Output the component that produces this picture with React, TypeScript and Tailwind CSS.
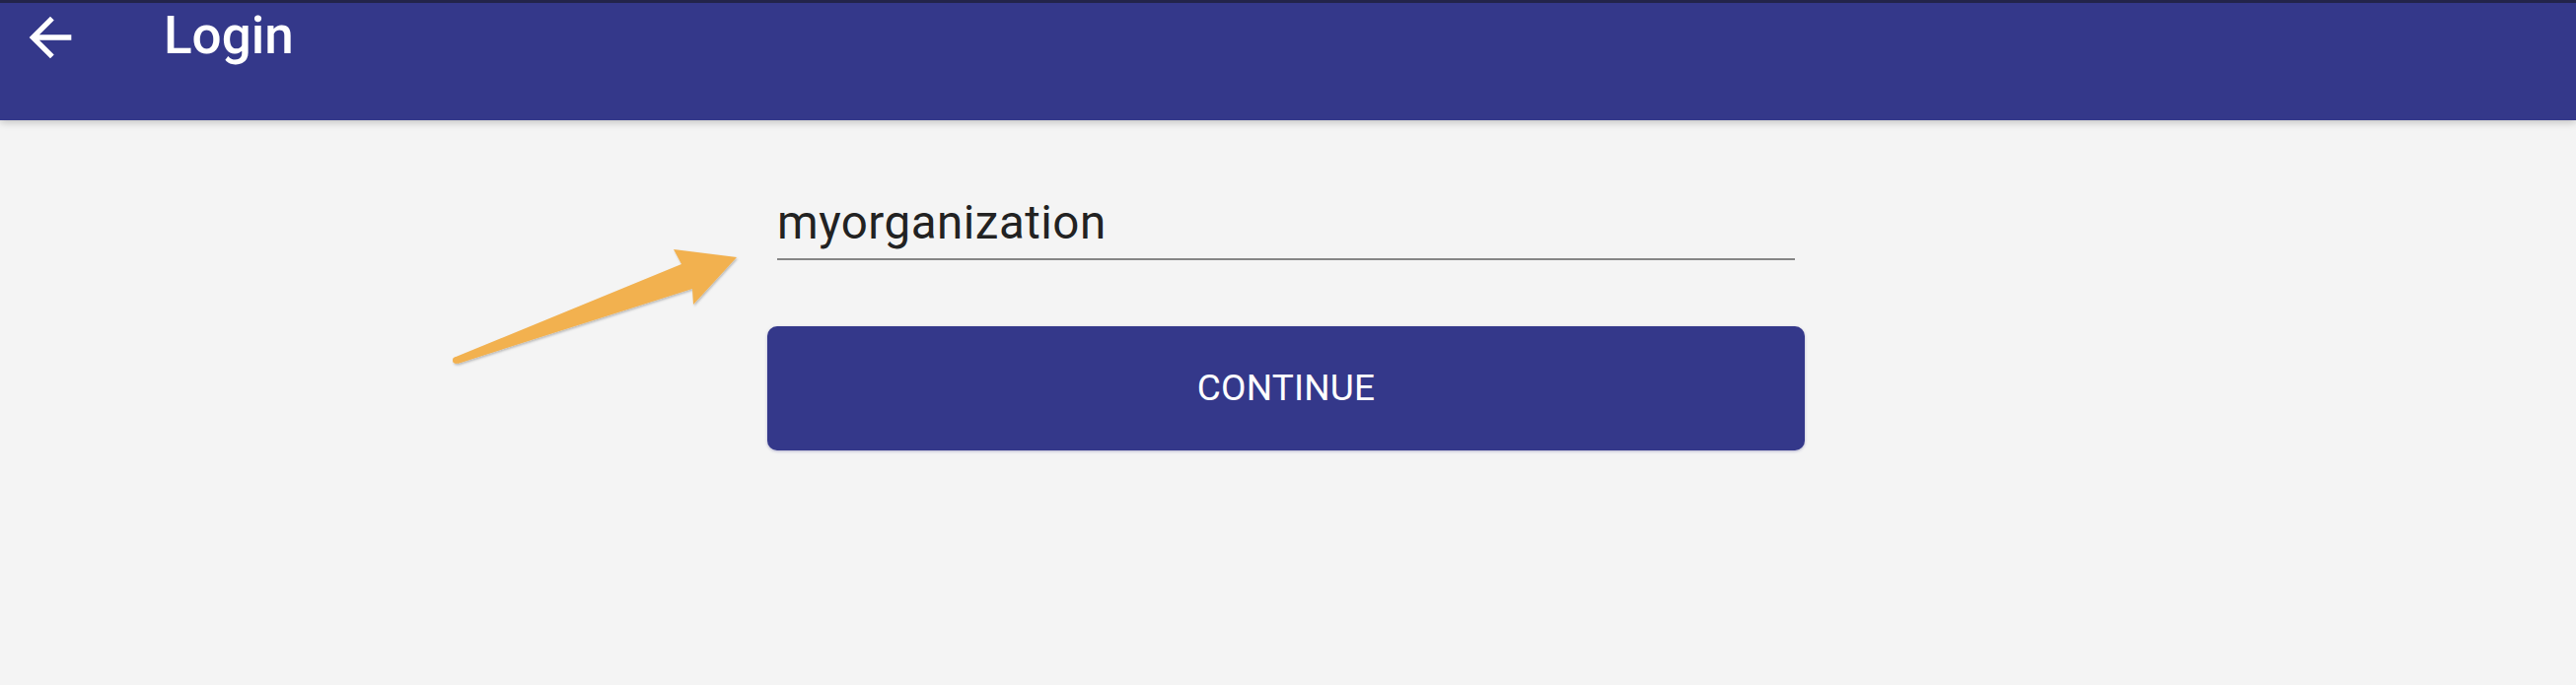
import React from "react";

export default function App() {
  return (
    <div
      className="relative w-full h-[695px] bg-[#f4f4f4] flex flex-col overflow-hidden"
      style={{ fontFamily: "Roboto, 'Liberation Sans', sans-serif" }}
    >
      <header className="h-[122px] shrink-0 border-t-[3px] border-[#23244a] bg-[#34388a] shadow-[0_2px_8px_rgba(0,0,0,0.22)] flex items-start">
        <svg
          className="ml-[19px] mt-[3px] w-[64px] h-[64px] shrink-0"
          viewBox="0 0 24 24"
          fill="#ffffff"
        >
          <path d="M20 11H7.83l5.59-5.59L12 4l-8 8 8 8 1.41-1.41L7.83 13H20v-2z" />
        </svg>
        <h1 className="ml-[83px] mt-[7px] text-[53px] leading-[53px] font-medium text-white">
          Login
        </h1>
      </header>

      <main className="flex flex-col ml-[778px] w-[1052px]">
        <div className="ml-[10px] w-[1032px] mt-[81px] pb-[11px] border-b-2 border-[#858585]">
          <span className="block text-[47.5px] leading-[47.5px] tracking-[0.5px] text-[#222222]">
            myorganization
          </span>
        </div>
        <button className="mt-[67px] h-[126px] w-full rounded-[10px] bg-[#34388a] shadow-[0_1px_3px_rgba(60,60,140,0.35)] flex items-center justify-center text-white text-[37px] leading-[37px] tracking-[0.2px]">
          CONTINUE
        </button>
      </main>

      <svg
        className="absolute left-[450px] top-[240px] w-[310px] h-[140px]"
        viewBox="450 240 310 140"
      >
        <defs>
          <filter id="sh" x="-10%" y="-20%" width="130%" height="150%">
            <feDropShadow dx="1" dy="1.5" stdDeviation="1.2" floodColor="#000" floodOpacity="0.25" />
          </filter>
        </defs>
        <g filter="url(#sh)" fill="#f2b14f">
          <path d="M461 362.5 L691 268 L683 253 L747 261 L703 309 L702 293 L464 369 Z" />
          <circle cx="462.3" cy="365.6" r="3.3" />
        </g>
      </svg>
    </div>
  );
}
